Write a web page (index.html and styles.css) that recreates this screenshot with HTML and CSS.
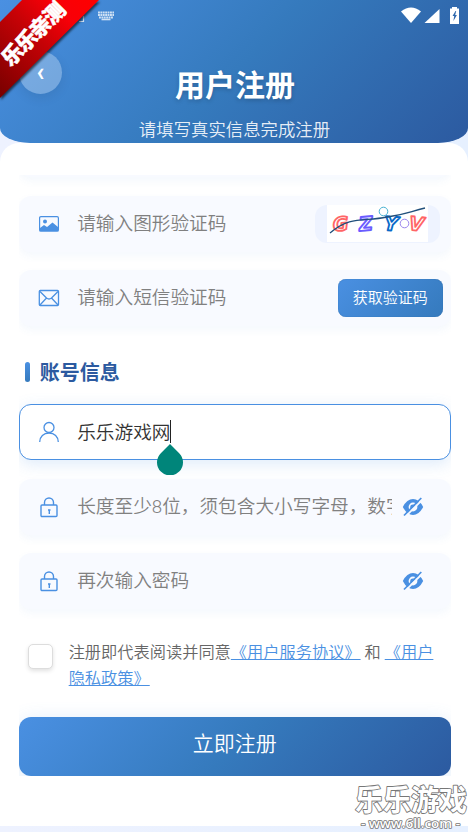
FILE: index.html
```html
<!DOCTYPE html>
<html lang="zh-CN">
<head>
<meta charset="utf-8">
<title>用户注册</title>
<link rel="stylesheet" href="styles.css">
</head>
<body>
<main class="screen">
  <header class="header">
    <div class="status">
      <svg class="keyboard" width="37" height="16" viewBox="0 0 37 16"><path d="M1 14.500h4.500V9" fill="none" stroke="#fff" stroke-width="1.200"/><path d="M20 5.500h16M20 8h16M21 10.500h14" stroke="#fff" stroke-width="1.800" stroke-dasharray="1.900 .5"/><path d="M23.500 12.500h9" stroke="#fff" stroke-width="1.600"/></svg>
      <svg class="signals" width="62" height="20" viewBox="0 0 62 20" fill="#fff"><path d="M1 4.500Q11 -3.500 21 4.500L11 16z"/><path d="M39.500 2v14H24.500z"/><path fill-rule="evenodd" d="M52 0h5v1.500h2V17h-9V1.500h2zM55.500 4l-3 5h1.700l-.8 5 3.500-6h-1.700l1-4z"/></svg>
    </div>
    <button class="back" aria-label="返回">‹</button>
    <h1 class="title">用户注册</h1>
    <p class="subtitle">请填写真实信息完成注册</p>
    <svg class="ribbon" width="106" height="106" viewBox="0 0 106 106">
      <defs><linearGradient id="red" x1="0" y1="1" x2="1" y2="0"><stop offset="0" stop-color="#700"/><stop offset=".5" stop-color="#c60206"/><stop offset=".75" stop-color="#f80008"/><stop offset="1" stop-color="#f00"/></linearGradient></defs>
      <path class="ribbon-band" d="M0 22L22 0H99L0 98z" fill="url(#red)"/>
      <text class="ribbon-text" transform="translate(10.500 67.500) rotate(-45)" textLength="80">乐乐亲测</text>
    </svg>
  </header>
  <section class="card">
    <form class="form">
      <div class="field field-past"></div>
      <div class="field">
        <svg class="icon" viewBox="0 0 22 22"><rect x="1.600" y="3.600" width="18.800" height="14.600" rx="1.300" fill="none" stroke="#4a90e2" stroke-width="1.200"/><circle cx="7" cy="8.500" r="2" fill="#4a90e2"/><path d="M2 15l4-3 3 2 5.500-4.500L20 14v4H2z" fill="#4a90e2"/></svg>
        <span class="placeholder">请输入图形验证码</span>
        <div class="captcha">
          <svg width="101" height="37" viewBox="0 0 101 37">
            <g class="captcha-letters"><text x="6" y="25.500" stroke="#ff6666" transform="rotate(-5 14 20)">G</text><text x="32" y="25.500" stroke="#6b5cff" transform="rotate(-5 38 20)">Z</text><text x="57" y="25.500" stroke="#0869c8" transform="rotate(4 63 20)">Y</text><text x="82" y="25.500" stroke="#ff6666" transform="rotate(6 89 20)">V</text></g>
            <path d="M3 28C24 10 37 17 60 12C77 10 82 7 98 3" fill="none" stroke="#204f7b" stroke-width="1.300"/>
            <circle cx="56.500" cy="6.500" r="4.300" fill="none" stroke="#45b0d2"/><circle cx="77.500" cy="18.500" r="4.300" fill="none" stroke="#9a85ed"/>
          </svg>
        </div>
      </div>
      <div class="field">
        <svg class="icon" viewBox="0 0 22 22" fill="none" stroke="#4a90e2" stroke-width="1.300"><rect x="1.300" y="3.500" width="19.200" height="15" rx="1"/><path d="M2 4.500l6.500 6.500q2.500 2 5 0L20 4.500M2 18l6.500-7M20 18l-6.500-7"/></svg>
        <span class="placeholder">请输入短信验证码</span>
        <button class="sms" type="button">获取验证码</button>
      </div>
      <h2 class="section-title">账号信息</h2>
      <div class="field field-focus">
        <svg class="icon" viewBox="0 0 22 22" fill="none" stroke="#4a90e2" stroke-width="1.300"><circle cx="11" cy="6.500" r="5"/><path d="M1.700 21c0-5.500 4-9 9.300-9s9.300 3.500 9.300 9"/></svg>
        <span class="value">乐乐游戏网</span>
        <svg class="handle" width="26" height="31" viewBox="0 0 26 31"><path d="M13 0L22.200 9.200A13 13 0 1 1 3.800 9.200z" fill="#00857a"/></svg>
      </div>
      <div class="field">
        <svg class="icon" viewBox="0 0 22 22" fill="none" stroke="#4a90e2" stroke-width="1.400"><rect x="3" y="9" width="16" height="11.500" rx="1"/><path d="M6.500 9V6.500a4.500 4.500 0 0 1 9 0V9M11.300 14v4M10 14h2.500"/></svg>
        <span class="placeholder placeholder-password">长度至少8位，须包含大小写字母，数字</span>
        <svg class="eye" viewBox="0 0 22 20"><path d="M.8 10Q5 2 11 2t10.200 8q-4.200 8-10.200 8T.8 10z" fill="#4a90e2"/><circle cx="11" cy="10" r="4.400" fill="#f8faff"/><path d="M11 7.500a2.800 2.800 0 0 0-2.800 3l1.300 1.500L14 8z" fill="#4a90e2"/><path d="M3 20L21 2" stroke="#f8faff" stroke-width="1.800"/><path d="M2 18.500L19.300 1" stroke="#4a90e2" stroke-width="1.700"/></svg>
      </div>
      <div class="field">
        <svg class="icon" viewBox="0 0 22 22" fill="none" stroke="#4a90e2" stroke-width="1.400"><rect x="3" y="9" width="16" height="11.500" rx="1"/><path d="M6.500 9V6.500a4.500 4.500 0 0 1 9 0V9M11.300 14v4M10 14h2.500"/></svg>
        <span class="placeholder">再次输入密码</span>
        <svg class="eye" viewBox="0 0 22 20"><path d="M.8 10Q5 2 11 2t10.200 8q-4.200 8-10.200 8T.8 10z" fill="#4a90e2"/><circle cx="11" cy="10" r="4.400" fill="#f8faff"/><path d="M11 7.500a2.800 2.800 0 0 0-2.800 3l1.300 1.500L14 8z" fill="#4a90e2"/><path d="M3 20L21 2" stroke="#f8faff" stroke-width="1.800"/><path d="M2 18.500L19.300 1" stroke="#4a90e2" stroke-width="1.700"/></svg>
      </div>
      <div class="agreement">
        <span class="checkbox"></span>
        <p class="terms">注册即代表阅读并同意<a class="link">《用户服务协议》</a> 和 <a class="link">《用户<br>隐私政策》</a></p>
      </div>
      <button class="submit" type="button">立即注册</button>
    </form>
  </section>
  <svg class="watermark" width="116" height="50" viewBox="0 0 116 50">
    <text class="mark-name" x="1" y="28" textLength="112" lengthAdjust="spacingAndGlyphs">乐乐游戏</text>
    <text class="mark-url" x="7" y="44.500" textLength="99" lengthAdjust="spacingAndGlyphs">- www.6ll.com -</text>
  </svg>
</main>
</body>
</html>
```
FILE: styles.css
```css
* { box-sizing: border-box; }
body { margin: 0; font-family: Roboto, "Noto Sans CJK SC", sans-serif; }
h1, h2, p { margin: 0; }
button { border: 0; padding: 0; font-family: inherit; color: #fff; }

.screen {
  position: relative;
  width: 468px;
  height: 832px;
  overflow: hidden;
  background: linear-gradient(90deg, #eef2ff, #e6f0ff);
}
.header {
  position: relative;
  height: 143px;
  display: flex;
  flex-direction: column;
  align-items: center;
  border-radius: 0 0 30px 30px / 0 0 15px 15px;
  background: linear-gradient(135deg, #4a90e2 0%, #357abd 50%, #2c5aa0 100%);
}
.status {
  align-self: stretch;
  height: 32px;
  padding: 7px 6px 0 78px;
  display: flex;
  justify-content: space-between;
}
.keyboard { opacity: .75; }
.back {
  position: absolute;
  left: 19px;
  top: 51px;
  width: 43px;
  height: 43px;
  border-radius: 50%;
  background: rgba(255, 255, 255, .28);
  box-shadow: 0 4px 12px rgba(0, 0, 0, .08);
  font-size: 25px;
  font-weight: 700;
  line-height: 39px;
}
.title {
  margin: 33px 0 0 2px;
  font-size: 30px;
  line-height: 42px;
  font-weight: 700;
  color: #fff;
  text-shadow: 0 2px 4px rgba(0, 0, 0, .18);
}
.subtitle {
  margin: 10px 0 0 1px;
  font-size: 17.400px;
  line-height: 26px;
  font-weight: 350;
  color: rgba(255, 255, 255, .9);
}
.ribbon { position: absolute; left: 0; top: 0; }
.ribbon-band { filter: drop-shadow(1px 2px 1px rgba(0, 0, 0, .6)); }
.ribbon-text {
  font-size: 21px;
  font-weight: 900;
  fill: #fff;
  stroke: #fff;
  stroke-width: .5px;
}

.card {
  height: 683px;
  padding: 32px 17px 0 18.670px;
  border-radius: 19px 19px 0 0;
  background: #fff;
}
.form {
  width: 432px;
  height: 601px;
  overflow: hidden;
  display: flex;
  flex-direction: column;
}
.field {
  position: relative;
  flex: none;
  height: 56px;
  margin-bottom: 18.670px;
  padding: 0 8px 0 19px;
  display: flex;
  align-items: center;
  border-radius: 12px;
  background: #f8faff;
  box-shadow: 0 4px 8px rgba(74, 144, 226, .06);
}
.field-past { margin-top: -54px; }
.icon { flex: none; width: 22px; height: 22px; margin-right: 17.500px; }
.placeholder {
  flex: 1;
  font-size: 18.670px;
  line-height: 28px;
  font-weight: 350;
  color: #808080;
  white-space: nowrap;
  overflow: hidden;
}
.placeholder-password { flex: 0 0 315px; }
.captcha {
  width: 125px;
  height: 38px;
  margin-right: 3px;
  display: flex;
  justify-content: center;
  border-radius: 12px;
  background: #eef3ff;
}
.captcha svg { background: #fff; }
.captcha-letters {
  font: italic 700 19px "DejaVu Sans", sans-serif;
  fill: #fff;
  stroke-width: 1.800px;
  stroke-linejoin: round;
}
.sms {
  width: 105px;
  height: 38px;
  padding-bottom: 3px;
  border-radius: 8px;
  background: linear-gradient(135deg, #4a90e2, #357abd);
  font-size: 15px;
  font-weight: 350;
  box-shadow: inset 0 0 1px #25639f;
}
.section-title {
  flex: none;
  height: 40px;
  margin: 7px 0 12px;
  padding-left: 21px;
  position: relative;
  font-size: 20px;
  line-height: 42px;
  font-weight: 700;
  color: #2c5aa0;
}
.section-title::before {
  content: "";
  position: absolute;
  left: 6px;
  top: 10px;
  width: 5px;
  height: 20px;
  border-radius: 3px;
  background: linear-gradient(#4a90e2, #357abd);
}
.field-focus {
  z-index: 1;
  padding-left: 18px;
  border: 1px solid #4a90e2;
  background: #fff;
  box-shadow: 0 4px 16px rgba(74, 144, 226, .18);
}
.value {
  height: 23px;
  border-right: 1px solid #222;
  font-size: 18.670px;
  line-height: 27px;
  font-weight: 350;
  color: #333;
}
.handle { position: absolute; left: 137px; top: 39px; }
.eye { width: 22px; height: 20px; margin-left: auto; margin-right: 19px; }
.agreement {
  flex: none;
  display: flex;
  margin: 12px 0 25px;
  padding-left: 9px;
}
.checkbox {
  flex: none;
  width: 25px;
  height: 25px;
  margin: 4px 16px 0 0;
  border: 1px solid #ddd;
  border-radius: 5px;
  background: #fff;
  box-shadow: 0 2px 4px rgba(0, 0, 0, .12);
}
.terms {
  font-size: 16.230px;
  line-height: 26px;
  font-weight: 350;
  color: #666;
  white-space: nowrap;
}
.link { color: #4a90e2; text-decoration: underline; }
.submit {
  flex: none;
  height: 59px;
  padding-bottom: 9px;
  border-radius: 12px;
  background: linear-gradient(135deg, #4a90e2 0%, #357abd 50%, #2c5aa0 100%);
  box-shadow: 0 4px 20px rgba(74, 144, 226, .2);
  font-size: 21px;
  font-weight: 350;
}
.watermark { position: absolute; left: 354px; top: 783px; }
.watermark text {
  fill: #fff;
  stroke: #777;
  stroke-width: 1.800px;
  stroke-linejoin: round;
  paint-order: stroke;
  font-weight: 700;
}
.mark-name { font-size: 29px; }
.watermark .mark-url { font-family: "Open Sans", sans-serif; font-size: 12px; font-weight: 600; stroke-width: 1.500px; }
```
